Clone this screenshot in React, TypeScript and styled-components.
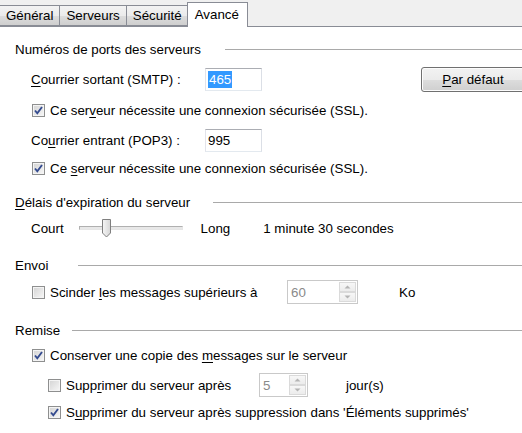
import * as React from 'react';
import styled, { createGlobalStyle } from 'styled-components';

const GlobalStyle = createGlobalStyle`
    html, body {
        margin: 0;
        padding: 0;
        background: #ffffff;
    }
    body {
        font-family: "Liberation Sans", Arial, sans-serif;
        font-size: 13.33px;
        color: #000;
    }
`;

const Window = styled.div`
    width: 522px;
    height: 433px;
    overflow: hidden;
    background: #fff;
`;

const TabStrip = styled.div`
    display: flex;
    align-items: flex-end;
    height: 26px;
    background: #f0f0f0;
    border-bottom: 1px solid #898c95;
`;

const Tab = styled.div<{ $active?: boolean }>`
    position: relative;
    display: flex;
    align-items: center;
    box-sizing: border-box;
    height: ${p => (p.$active ? '25px' : '21px')};
    margin: ${p => (p.$active ? '0 -1px -1px -2px' : '0')};
    padding: ${p => (p.$active ? '0 8px 2px 7px' : '0 6px 0 6px')};
    border: 1px solid #898c95;
    border-bottom: ${p => (p.$active ? 'none' : '1px solid #898c95')};
    border-left-width: ${p => (p.$active ? '1px' : '0')};
    background: ${p => (p.$active ? '#ffffff' : 'linear-gradient(#f3f3f3, #ebebeb 50%, #dddddd 51%, #cfcfcf)')};
    z-index: ${p => (p.$active ? 2 : 1)};
    &:first-child {
        border-left-width: 0;
    }
`;

const Panel = styled.div`
    display: flex;
    flex-direction: column;
    padding-top: 12px;
`;

const Legend = styled.div<{ $mt?: number }>`
    display: flex;
    align-items: center;
    height: 20px;
    margin-top: ${p => p.$mt || 0}px;
    padding-left: 15px;
    white-space: nowrap;
`;

const Rule = styled.div<{ $gap: number }>`
    flex: 1;
    height: 1px;
    margin-left: ${p => p.$gap}px;
    background: #a9a9a9;
    box-shadow: 0 1px 0 #ffffff;
`;

const Row = styled.div<{ $mt?: number; $h?: number; $indent?: number }>`
    display: flex;
    align-items: center;
    height: ${p => p.$h || 20}px;
    margin-top: ${p => p.$mt || 0}px;
    padding-left: ${p => p.$indent || 31}px;
    white-space: nowrap;
`;

const FieldLabel = styled.span<{ $w: number }>`
    width: ${p => p.$w}px;
    flex-shrink: 0;
`;

const Text = styled.span<{ $ml?: number }>`
    margin-left: ${p => p.$ml || 0}px;
`;

const Key = styled.span`
    text-decoration: underline;
    text-underline-offset: 2px;
`;

const TextInput = styled.div`
    display: flex;
    align-items: center;
    box-sizing: border-box;
    width: 57px;
    height: 23px;
    padding-left: 2px;
    border: 1px solid;
    border-color: #abadb3 #dbdfe6 #e3e9ef #e2e3ea;
    background: #fff;
    flex-shrink: 0;
`;

const Selected = styled.span`
    background: #3399ff;
    color: #fff;
    padding: 1px 1px;
`;

const PushButton = styled.div`
    display: flex;
    align-items: center;
    justify-content: center;
    box-sizing: border-box;
    flex-shrink: 0;
    width: 112px;
    height: 25px;
    margin-left: auto;
    margin-right: -11px;
    padding-right: 8px;
    border: 1px solid #707070;
    border-radius: 3px;
    background: linear-gradient(#f2f2f2, #ebebeb 50%, #dddddd 51%, #cfcfcf);
    box-shadow: inset 0 0 0 1px #fcfcfc;
`;

const Box = styled.span<{ $checked?: boolean }>`
    display: inline-flex;
    align-items: center;
    justify-content: center;
    box-sizing: border-box;
    width: 13px;
    height: 13px;
    margin-left: 1px;
    margin-right: 5px;
    flex-shrink: 0;
    border: 1px solid #8e8f8f;
    background: linear-gradient(135deg, #d3d3d3, #f0f0f0 80%, #fafafa);
    box-shadow: inset 0 0 0 1px #f4f4f4;
`;

const Track = styled.div`
    position: relative;
    width: 104px;
    height: 4px;
    margin: 0 18px 0 15px;
    border: 1px solid #c8c8c8;
    border-color: #b0b0b0 #e6e6e6 #e6e6e6 #b0b0b0;
    background: #e8e8e8;
    box-sizing: border-box;
`;

const Thumb = styled.svg`
    position: absolute;
    left: 22px;
    top: -8px;
`;

const Spin = styled.div<{ $w: number }>`
    display: flex;
    box-sizing: border-box;
    width: ${p => p.$w}px;
    height: 24px;
    flex-shrink: 0;
    border: 1px solid #c9c9c9;
    background: #fff;
    color: #8a8a8a;
`;

const SpinValue = styled.span`
    flex: 1;
    display: flex;
    align-items: center;
    padding-left: 3px;
`;

const SpinButtons = styled.div`
    display: flex;
    flex-direction: column;
    width: 17px;
    margin: 1px;
    gap: 0;
`;

const SpinArrow = styled.div`
    flex: 1;
    display: flex;
    align-items: center;
    justify-content: center;
    border: 1px solid #dadada;
    background: linear-gradient(#f7f7f7, #ececec);
`;

function CheckBox({ checked }: { checked?: boolean }) {
    return (
        <Box $checked={checked}>
            {checked && (
                <svg width="11" height="11" viewBox="0 0 11 11">
                    <path d="M2 5.5 L4.3 8.3 L9 2" fill="none" stroke="#344b8f" strokeWidth="1.9" />
                </svg>
            )}
        </Box>
    );
}

function Spinner({ value, width }: { value: string; width: number }) {
    return (
        <Spin $w={width}>
            <SpinValue>{value}</SpinValue>
            <SpinButtons>
                <SpinArrow>
                    <svg width="7" height="4" viewBox="0 0 7 4"><path d="M0.5 3.5 L3.5 0.5 L6.5 3.5 Z" fill="#b4b4b4" /></svg>
                </SpinArrow>
                <SpinArrow>
                    <svg width="7" height="4" viewBox="0 0 7 4"><path d="M0.5 0.5 L3.5 3.5 L6.5 0.5 Z" fill="#b4b4b4" /></svg>
                </SpinArrow>
            </SpinButtons>
        </Spin>
    );
}

export default function App() {
    return (
        <Window>
            <GlobalStyle />
            <TabStrip>
                <Tab>Général</Tab>
                <Tab>Serveurs</Tab>
                <Tab>Sécurité</Tab>
                <Tab $active>Avancé</Tab>
            </TabStrip>
            <Panel>
                <Legend>
                    Numéros de ports des serveurs
                    <Rule $gap={24} />
                </Legend>
                <Row $mt={7} $h={26}>
                    <FieldLabel $w={174}><Key>C</Key>ourrier sortant (SMTP) :</FieldLabel>
                    <TextInput><Selected>465</Selected></TextInput>
                    <PushButton><span><Key>P</Key>ar défaut</span></PushButton>
                </Row>
                <Row $mt={8}>
                    <CheckBox checked />
                    <Text>Ce ser<Key>v</Key>eur nécessite une connexion sécurisée (SSL).</Text>
                </Row>
                <Row $mt={8} $h={24}>
                    <FieldLabel $w={174}>Co<Key>u</Key>rrier entrant (POP3) :</FieldLabel>
                    <TextInput>995</TextInput>
                </Row>
                <Row $mt={6}>
                    <CheckBox checked />
                    <Text>Ce <Key>s</Key>erveur nécessite une connexion sécurisée (SSL).</Text>
                </Row>

                <Legend $mt={14}>
                    <span><Key>D</Key>élais d'expiration du serveur</span>
                    <Rule $gap={23} />
                </Legend>
                <Row $mt={4} $h={24}>
                    <Text>Court</Text>
                    <Track>
                        <Thumb width="10" height="19" viewBox="0 0 10 19">
                            <defs>
                                <linearGradient id="thumb" x1="0" y1="0" x2="1" y2="0">
                                    <stop offset="0" stopColor="#f6f6f6" />
                                    <stop offset="1" stopColor="#d6d6d6" />
                                </linearGradient>
                            </defs>
                            <path d="M0.5 0.5 H8.5 V14 L4.5 18 L0.5 14 Z" fill="url(#thumb)" stroke="#7f7f7f" />
                        </Thumb>
                    </Track>
                    <Text>Long</Text>
                    <Text $ml={33}>1 minute 30 secondes</Text>
                </Row>

                <Legend $mt={15}>
                    Envoi
                    <Rule $gap={30} />
                </Legend>
                <Row $mt={5} $h={24}>
                    <CheckBox />
                    <FieldLabel $w={237}>Scinder <Key>l</Key>es messages supérieurs à</FieldLabel>
                    <Spinner value="60" width={71} />
                    <Text $ml={41}>Ko</Text>
                </Row>

                <Legend $mt={16}>
                    Remise
                    <Rule $gap={12} />
                </Legend>
                <Row $mt={5}>
                    <CheckBox checked />
                    <Text>Conserver une copie des <Key>m</Key>essages sur le serveur</Text>
                </Row>
                <Row $mt={8} $h={24} $indent={47}>
                    <CheckBox />
                    <FieldLabel $w={193}>Supp<Key>r</Key>imer du serveur après</FieldLabel>
                    <Spinner value="5" width={49} />
                    <Text $ml={38}>jour(s)</Text>
                </Row>
                <Row $mt={5} $indent={47}>
                    <CheckBox checked />
                    <Text>S<Key>u</Key>pprimer du serveur après suppression dans 'Éléments supprimés'</Text>
                </Row>
            </Panel>
        </Window>
    );
}
